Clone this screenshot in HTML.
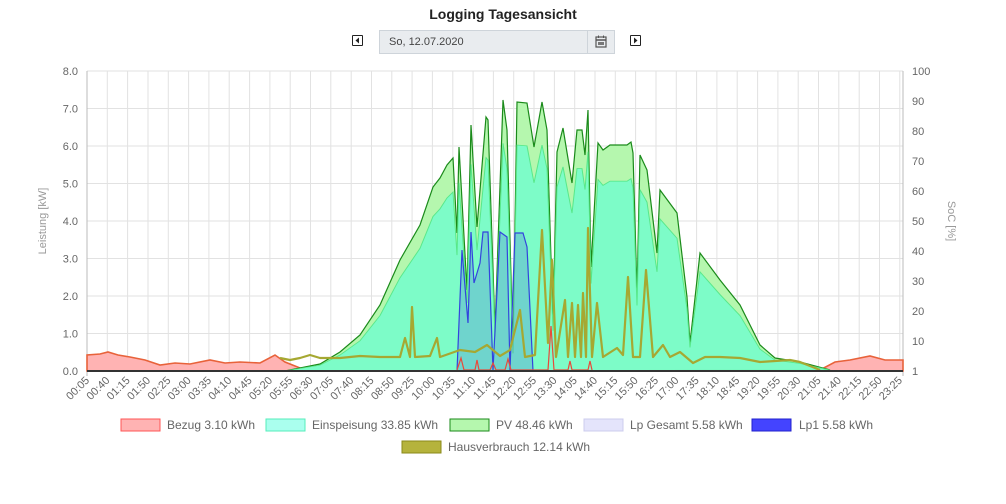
<!DOCTYPE html>
<html><head><meta charset="utf-8"><style>
body{margin:0;width:1006px;height:504px;background:#fff;font-family:"Liberation Sans",sans-serif;position:relative;overflow:hidden}
.t{position:absolute;left:0;width:1006px;top:6px;text-align:center;font-weight:bold;font-size:14px;color:#222}
.box{position:absolute;left:379px;top:30px;width:234px;height:22px;background:#e9ecef;border:1px solid #ced4da;font-size:11px;color:#444;line-height:22px}
.box span{position:absolute;left:9px}
.cal{position:absolute;right:0;top:0;width:26px;height:22px;border-left:1px solid #ced4da}
.arr{position:absolute;top:35px;width:9px;height:9px;border:1px solid #222;border-radius:1px}
.arr svg{display:block}
</style></head><body>
<div class="t">Logging Tagesansicht</div>
<div class="arr" style="left:352px"><svg width="9" height="9"><polygon points="6,1.5 6,7.5 2.5,4.5" fill="#222"/></svg></div>
<div class="arr" style="left:630px"><svg width="9" height="9"><polygon points="3,1.5 3,7.5 6.5,4.5" fill="#222"/></svg></div>
<div class="box"><span>So, 12.07.2020</span><div class="cal"><svg width="26" height="22" style="display:block"><rect x="8" y="6" width="10" height="10" fill="none" stroke="#555" stroke-width="1.2"/><line x1="8" y1="9" x2="18" y2="9" stroke="#555" stroke-width="1.5"/><line x1="10.5" y1="4.5" x2="10.5" y2="7" stroke="#555"/><line x1="15.5" y1="4.5" x2="15.5" y2="7" stroke="#555"/><rect x="10" y="11" width="6" height="3" fill="#777"/></svg></div></div>
<svg width="1006" height="504" style="position:absolute;left:0;top:0" font-family="Liberation Sans, sans-serif">
<defs>
<polygon id="pvp" points="285,371 300,368 320,364 340,352 360,335 380,305 400,260 420,225 433,187 440,178 447,165 453,158 457,233 459,147 467,290 471,125 477,227 486,117 488,120 495,330 503,100 507,130 513,350 517,102 527,103 534,147 542,102 547,130 553,323 557,152 563,128 572,183 577,130 582,130 585,155 588,110 591,267 598,143 603,150 610,145 627,145 631,142 633,153 637,293 640,155 647,170 657,253 660,190 677,213 687,297 690,343 700,253 720,280 740,305 760,345 775,358 800,362 830,370"/>
</defs>
<g stroke="#e2e2e2" stroke-width="1">
<line x1="87" y1="71" x2="903" y2="71"/><line x1="87" y1="108.5" x2="903" y2="108.5"/><line x1="87" y1="146" x2="903" y2="146"/><line x1="87" y1="183.5" x2="903" y2="183.5"/><line x1="87" y1="221" x2="903" y2="221"/><line x1="87" y1="258.5" x2="903" y2="258.5"/><line x1="87" y1="296" x2="903" y2="296"/><line x1="87" y1="333.5" x2="903" y2="333.5"/>
<line x1="107.3" y1="71" x2="107.3" y2="371"/><line x1="127.6" y1="71" x2="127.6" y2="371"/><line x1="148" y1="71" x2="148" y2="371"/><line x1="168.3" y1="71" x2="168.3" y2="371"/><line x1="188.6" y1="71" x2="188.6" y2="371"/><line x1="208.9" y1="71" x2="208.9" y2="371"/><line x1="229.2" y1="71" x2="229.2" y2="371"/><line x1="249.6" y1="71" x2="249.6" y2="371"/><line x1="269.9" y1="71" x2="269.9" y2="371"/><line x1="290.2" y1="71" x2="290.2" y2="371"/><line x1="310.5" y1="71" x2="310.5" y2="371"/><line x1="330.8" y1="71" x2="330.8" y2="371"/><line x1="351.2" y1="71" x2="351.2" y2="371"/><line x1="371.5" y1="71" x2="371.5" y2="371"/><line x1="391.8" y1="71" x2="391.8" y2="371"/><line x1="412.1" y1="71" x2="412.1" y2="371"/><line x1="432.4" y1="71" x2="432.4" y2="371"/><line x1="452.8" y1="71" x2="452.8" y2="371"/><line x1="473.1" y1="71" x2="473.1" y2="371"/><line x1="493.4" y1="71" x2="493.4" y2="371"/><line x1="513.7" y1="71" x2="513.7" y2="371"/><line x1="534" y1="71" x2="534" y2="371"/><line x1="554.4" y1="71" x2="554.4" y2="371"/><line x1="574.7" y1="71" x2="574.7" y2="371"/><line x1="595" y1="71" x2="595" y2="371"/><line x1="615.3" y1="71" x2="615.3" y2="371"/><line x1="635.6" y1="71" x2="635.6" y2="371"/><line x1="656" y1="71" x2="656" y2="371"/><line x1="676.3" y1="71" x2="676.3" y2="371"/><line x1="696.6" y1="71" x2="696.6" y2="371"/><line x1="716.9" y1="71" x2="716.9" y2="371"/><line x1="737.2" y1="71" x2="737.2" y2="371"/><line x1="757.6" y1="71" x2="757.6" y2="371"/><line x1="777.9" y1="71" x2="777.9" y2="371"/><line x1="798.2" y1="71" x2="798.2" y2="371"/><line x1="818.5" y1="71" x2="818.5" y2="371"/><line x1="838.8" y1="71" x2="838.8" y2="371"/><line x1="859.2" y1="71" x2="859.2" y2="371"/><line x1="879.5" y1="71" x2="879.5" y2="371"/><line x1="899.8" y1="71" x2="899.8" y2="371"/>
</g>
<line x1="87" y1="71" x2="87" y2="376" stroke="#bbb"/>
<line x1="903" y1="71" x2="903" y2="376" stroke="#bbb"/>
<polygon fill="#ffb3b3" stroke="#e8623a" stroke-width="1.6" points="87,371 87,355 100,354 108,352 118,355 130,357 145,360 160,365 175,363 190,364 210,360 225,363 240,362 260,363 275,355 285,362 300,368 320,370 820,370 835,362 850,360 870,356 885,360 903,360 903,371"/>
<use href="#pvp" fill="#b5f7ae" stroke="#1a8a1a" stroke-width="1.2"/>
<use href="#pvp" transform="translate(0,371) scale(1,0.84) translate(0,-371)" fill="#7dfcc8" stroke="#58e88a" stroke-width="1"/>
<polygon fill="rgba(70,90,220,0.25)" stroke="#3344dd" stroke-width="1.2" points="457,371 462,250 468,323 471,232 474,283 480,263 483,232 488,232 493,370 500,232 507,237 510,370 515,233 523,233 527,247 533,371"/>
<polyline fill="none" stroke="#e84a3a" stroke-width="1.2" points="457,370 461,358 464,370 475,370 477,360 479,370 490,370 493,363 496,370 505,370 508,359 511,370 548,370 551,326 554,370 568,370 570,361 572,370 588,370 590,361 592,370"/>
<polyline fill="none" stroke="#a6a832" stroke-width="2.2" stroke-linejoin="round" points="280,358 290,360 300,358 310,355 320,358 340,358 360,356 380,357 400,357 405,338 410,357 412,307 415,357 430,356 437,338 440,357 460,350 475,352 487,345 500,356 510,350 520,310 525,357 535,355 542,230 548,343 552,260 556,357 565,300 568,357 572,303 575,357 578,305 581,357 583,293 586,357 588,228 592,357 597,303 603,357 617,348 623,355 628,277 633,357 640,357 646,270 653,357 663,345 670,357 680,352 693,363 705,357 720,357 740,358 760,362 790,360 800,362 820,370"/>
<line x1="87" y1="371" x2="903" y2="371" stroke="#333" stroke-width="2"/>
<g font-size="11" fill="#666" text-anchor="end">
<text x="78" y="75">8.0</text><text x="78" y="112.5">7.0</text><text x="78" y="150">6.0</text><text x="78" y="187.5">5.0</text><text x="78" y="225">4.0</text><text x="78" y="262.5">3.0</text><text x="78" y="300">2.0</text><text x="78" y="337.5">1.0</text><text x="78" y="375">0.0</text>
</g>
<g font-size="11" fill="#666">
<text x="912" y="75">100</text><text x="912" y="105">90</text><text x="912" y="135">80</text><text x="912" y="165">70</text><text x="912" y="195">60</text><text x="912" y="225">50</text><text x="912" y="255">40</text><text x="912" y="285">30</text><text x="912" y="315">20</text><text x="912" y="345">10</text><text x="912" y="375">1</text>
</g>
<text transform="translate(46,221) rotate(-90)" font-size="11" fill="#999" text-anchor="middle">Leistung [kW]</text>
<text transform="translate(948,221) rotate(90)" font-size="11" fill="#999" text-anchor="middle">SoC [%]</text>
<g font-size="11" fill="#666" text-anchor="end">
<text transform="translate(90,381) rotate(-45)">00:05</text><text transform="translate(110.3,381) rotate(-45)">00:40</text><text transform="translate(130.6,381) rotate(-45)">01:15</text><text transform="translate(151,381) rotate(-45)">01:50</text><text transform="translate(171.3,381) rotate(-45)">02:25</text><text transform="translate(191.6,381) rotate(-45)">03:00</text><text transform="translate(211.9,381) rotate(-45)">03:35</text><text transform="translate(232.2,381) rotate(-45)">04:10</text><text transform="translate(252.6,381) rotate(-45)">04:45</text><text transform="translate(272.9,381) rotate(-45)">05:20</text><text transform="translate(293.2,381) rotate(-45)">05:55</text><text transform="translate(313.5,381) rotate(-45)">06:30</text><text transform="translate(333.8,381) rotate(-45)">07:05</text><text transform="translate(354.2,381) rotate(-45)">07:40</text><text transform="translate(374.5,381) rotate(-45)">08:15</text><text transform="translate(394.8,381) rotate(-45)">08:50</text><text transform="translate(415.1,381) rotate(-45)">09:25</text><text transform="translate(435.4,381) rotate(-45)">10:00</text><text transform="translate(455.8,381) rotate(-45)">10:35</text><text transform="translate(476.1,381) rotate(-45)">11:10</text><text transform="translate(496.4,381) rotate(-45)">11:45</text><text transform="translate(516.7,381) rotate(-45)">12:20</text><text transform="translate(537,381) rotate(-45)">12:55</text><text transform="translate(557.4,381) rotate(-45)">13:30</text><text transform="translate(577.7,381) rotate(-45)">14:05</text><text transform="translate(598,381) rotate(-45)">14:40</text><text transform="translate(618.3,381) rotate(-45)">15:15</text><text transform="translate(638.6,381) rotate(-45)">15:50</text><text transform="translate(659,381) rotate(-45)">16:25</text><text transform="translate(679.3,381) rotate(-45)">17:00</text><text transform="translate(699.6,381) rotate(-45)">17:35</text><text transform="translate(719.9,381) rotate(-45)">18:10</text><text transform="translate(740.2,381) rotate(-45)">18:45</text><text transform="translate(760.6,381) rotate(-45)">19:20</text><text transform="translate(780.9,381) rotate(-45)">19:55</text><text transform="translate(801.2,381) rotate(-45)">20:30</text><text transform="translate(821.5,381) rotate(-45)">21:05</text><text transform="translate(841.8,381) rotate(-45)">21:40</text><text transform="translate(862.2,381) rotate(-45)">22:15</text><text transform="translate(882.5,381) rotate(-45)">22:50</text><text transform="translate(902.8,381) rotate(-45)">23:25</text>
</g>
<g font-size="12" fill="#666">
<rect x="121" y="419" width="39" height="12" fill="#ffb3b3" stroke="#ff5555"/><text x="167" y="429">Bezug 3.10 kWh</text>
<rect x="266" y="419" width="39" height="12" fill="#aaffee" stroke="#55eebb"/><text x="312" y="429">Einspeisung 33.85 kWh</text>
<rect x="450" y="419" width="39" height="12" fill="#b5f7ae" stroke="#1a8a1a"/><text x="496" y="429">PV 48.46 kWh</text>
<rect x="584" y="419" width="39" height="12" fill="#e4e4fb" stroke="#ccccee"/><text x="630" y="429">Lp Gesamt 5.58 kWh</text>
<rect x="752" y="419" width="39" height="12" fill="#4444ff" stroke="#2222cc"/><text x="799" y="429">Lp1 5.58 kWh</text>
<rect x="402" y="441" width="39" height="12" fill="#b5b33c" stroke="#8a8a1a"/><text x="448" y="451">Hausverbrauch 12.14 kWh</text>
</g>
</svg>
</body></html>
